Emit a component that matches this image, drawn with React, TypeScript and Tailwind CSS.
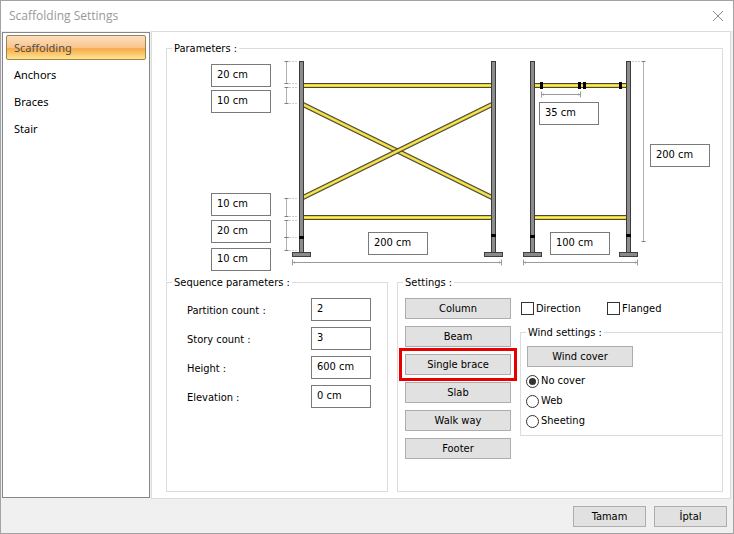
import { useState } from 'react';
import type { ReactNode } from 'react';

const sections = ['Scaffolding', 'Anchors', 'Braces', 'Stair'];
const elements = ['Column', 'Beam', 'Single brace', 'Slab', 'Walk way', 'Footer'];
const covers = ['No cover', 'Web', 'Sheeting'];

const sequence = [
  { id: 'partitions', label: 'Partition count :', value: '2' },
  { id: 'stories', label: 'Story count :', value: '3' },
  { id: 'height', label: 'Height :', value: '600 cm' },
  { id: 'elevation', label: 'Elevation :', value: '0 cm' },
];

interface ValueBoxProps {
  value: string;
  label?: string;
  id?: string;
  className?: string;
}

function ValueBox({ value, label, id, className = '' }: ValueBoxProps) {
  return (
    <input
      id={id}
      type="text"
      aria-label={label}
      defaultValue={value}
      className={`block h-[23px] w-[60px] shrink-0 border border-[#7a7a7a] bg-white pb-[3px] pl-[5px] text-[11px] ${className}`}
    />
  );
}

interface PushButtonProps {
  children: ReactNode;
  className?: string;
}

function PushButton({ children, className = '' }: PushButtonProps) {
  return (
    <button
      type="button"
      className={`flex h-[21px] items-center justify-center border border-[#adadad] bg-[#e1e1e1] pt-0.5 ${className}`}
    >
      {children}
    </button>
  );
}

interface GroupProps {
  title: string;
  children: ReactNode;
  className?: string;
}

function Group({ title, children, className = '' }: GroupProps) {
  return (
    <fieldset className={`min-w-0 border-[#dcdcdc] ${className}`}>
      <legend className="ml-[5px] px-0.5 pt-0.5 leading-[14px]">{title}</legend>
      {children}
    </fieldset>
  );
}

function CheckBox({ label, className = '' }: { label: string; className?: string }) {
  return (
    <label className={`flex items-center gap-0.5 ${className}`}>
      <input
        type="checkbox"
        className="size-[13px] appearance-none border border-[#333333] bg-white checked:bg-[#333333]"
      />
      <span className="pt-0.5">{label}</span>
    </label>
  );
}

function Post({ x, joint }: { x: number; joint: number }) {
  return (
    <g>
      <rect x={x} y={61} width={5} height={191} fill="#3a3a3a" />
      <rect x={x + 1} y={62} width={3} height={190} fill="#8c8c8c" />
      <rect x={x} y={joint} width={5} height={3} fill="#000" />
      <rect x={x - 6.5} y={252.5} width={18} height={4} fill="#8a8a8a" stroke="#3f3f3f" />
    </g>
  );
}

interface TubeProps {
  x1: number;
  y1: number;
  x2: number;
  y2: number;
}

function Tube(p: TubeProps) {
  return (
    <g>
      <line {...p} stroke="#4a4838" strokeWidth={5} />
      <line {...p} stroke="#e3cf3c" strokeWidth={3} />
      <line {...p} stroke="#fff05a" strokeWidth={1} />
    </g>
  );
}

function HorizontalDim({ x1, x2, y }: { x1: number; x2: number; y: number }) {
  return (
    <path
      d={`M${x1} ${y}H${x2}M${x1} ${y - 3}v6M${x2} ${y - 3}v6M${x1 + 2} ${y - 1}v2M${x2 - 2} ${y - 1}v2`}
      stroke="#9a9a9a"
      fill="none"
    />
  );
}

function VerticalDim({ y1, y2, x }: { y1: number; y2: number; x: number }) {
  return (
    <g fill="none">
      <path d={`M${x} ${y1}V${y2}`} stroke="#b0b0b0" />
      <path d={`M${x - 2} ${y1}h4M${x - 2} ${y2}h4`} stroke="#7f7f7f" />
    </g>
  );
}

function ScaffoldDrawing() {
  return (
    <svg width="372" height="216" viewBox="280 56 372 216" aria-hidden="true">
      {/* front view */}
      <Tube x1={303} y1={104.5} x2={492} y2={197.5} />
      <Tube x1={303} y1={197.5} x2={492} y2={104.5} />
      <Tube x1={303} y1={85.5} x2={492} y2={85.5} />
      <Tube x1={303} y1={217.5} x2={492} y2={217.5} />
      <Post x={299} joint={236} />
      <Post x={491} joint={234} />

      {/* side view */}
      <Tube x1={534} y1={85.5} x2={627} y2={85.5} />
      <Tube x1={534} y1={217.5} x2={627} y2={217.5} />
      <path d="M540 82h3v7h-3zM578 82h3v7h-3zM583 82h3v7h-3zM619 82h3v7h-3z" fill="#000" />
      <Post x={530} joint={235} />
      <Post x={626} joint={234} />

      {/* dimension lines */}
      <VerticalDim x={286.5} y1={61.5} y2={83.5} />
      <VerticalDim x={286.5} y1={87.5} y2={103.5} />
      <VerticalDim x={286.5} y1={198.5} y2={216.5} />
      <VerticalDim x={286.5} y1={220.5} y2={237.5} />
      <VerticalDim x={286.5} y1={237.5} y2={250.5} />
      <VerticalDim x={643.5} y1={61.5} y2={241.5} />
      <path
        d="M289 61.5h9M289 83.5h9M289 87.5h9M289 103.5h9M289 198.5h9M289 216.5h9M289 220.5h9M289 237.5h9M289 250.5h9M632 61.5h9"
        stroke="#cfcfcf"
        strokeDasharray="2 1"
      />
      <HorizontalDim x1={541.5} x2={580.5} y={94.5} />
      <HorizontalDim x1={292.5} x2={501.5} y={262.5} />
      <HorizontalDim x1={523.5} x2={637.5} y={262.5} />
    </svg>
  );
}

export default function App() {
  const [section, setSection] = useState('Scaffolding');
  const [cover, setCover] = useState('No cover');

  return (
    <div className="flex min-h-screen flex-col border border-[#a3a3a3] bg-[#f0f0f0] font-['DejaVu_Sans_Condensed','DejaVu_Sans',sans-serif] text-[11px] text-black">
      {/* Title bar */}
      <header className="flex h-[30px] items-center justify-between bg-white pr-[9px] pl-2">
        <h1 className="font-['Open_Sans',sans-serif] text-[12px] text-[#999999]">Scaffolding Settings</h1>
        <button type="button" aria-label="Close">
          <svg width="12" height="12" viewBox="0 0 12 12" fill="none" stroke="#8a8a8a">
            <path d="M1 1l10 10M11 1L1 11" />
          </svg>
        </button>
      </header>

      <div className="flex grow">
        {/* Sections */}
        <nav className="m-px flex w-[148px] shrink-0 flex-col gap-0.5 border border-[#828790] bg-white px-[3px] pt-0.5 font-['Noto_Sans',sans-serif]">
          {sections.map((name) => (
            <button
              key={name}
              type="button"
              onClick={() => setSection(name)}
              className={`h-[25px] rounded-[2px] border pt-0.5 pl-[7px] text-left ${
                name === section
                  ? 'border-[#a08050] bg-[linear-gradient(#fbdfc0,#fac48a_50%,#f8a94a_55%,#fee790)] text-[#4d4d4d]'
                  : 'border-transparent'
              }`}
            >
              {name}
            </button>
          ))}
        </nav>

        <main className="mr-0.5 flex min-w-0 grow flex-col border border-[#dcdcdc] bg-white pt-2 pr-[7px] pb-[6px] pl-[14px]">
          <Group title="Parameters :" className="border-x border-t">
            <div className="flex h-[225px] pt-2 pl-11">
              <div className="flex w-[69px] shrink-0 flex-col">
                <ValueBox label="Top clearance" value="20 cm" />
                <ValueBox label="Upper brace offset" value="10 cm" className="mt-[3px]" />
                <ValueBox label="Lower brace offset" value="10 cm" className="mt-20" />
                <ValueBox label="Beam height" value="20 cm" className="mt-1" />
                <ValueBox label="Footer height" value="10 cm" className="mt-[5px]" />
              </div>
              <div className="relative -mt-2 shrink-0">
                <ScaffoldDrawing />
                <ValueBox label="Bay length" value="200 cm" className="absolute top-[176px] left-[88px]" />
                <ValueBox label="Walk way width" value="35 cm" className="absolute top-[46px] left-[259px]" />
                <ValueBox label="Bay width" value="100 cm" className="absolute top-[176px] left-[270px]" />
                <ValueBox label="Story height" value="200 cm" className="absolute top-[88px] left-[370px]" />
              </div>
            </div>
          </Group>

          <div className="-mt-[7px] flex grow gap-[9px]">
            <Group title="Sequence parameters :" className="w-[222px] shrink-0 border">
              <div className="flex flex-col gap-[6px] pt-2 pr-4 pl-5">
                {sequence.map((row) => (
                  <div key={row.id} className="flex items-center justify-between">
                    <label htmlFor={row.id} className="pt-[3px]">
                      {row.label}
                    </label>
                    <ValueBox id={row.id} value={row.value} />
                  </div>
                ))}
              </div>
            </Group>

            <Group title="Settings :" className="grow border">
              <div className="flex gap-[9px] pt-2 pl-[7px]">
                <div className="flex w-[106px] shrink-0 flex-col gap-[7px]">
                  {elements.map((name) => (
                    <PushButton
                      key={name}
                      className={name === 'Single brace' ? 'outline-3 outline-offset-3 outline-[#e60000]' : ''}
                    >
                      {name}
                    </PushButton>
                  ))}
                </div>

                <div className="min-w-0 grow">
                  <div className="mb-[6px] flex h-5 items-center pl-px">
                    <CheckBox label="Direction" className="w-[86px]" />
                    <CheckBox label="Flanged" />
                  </div>

                  <Group title="Wind settings :" className="border-y border-l">
                    <div className="pt-[6px] pb-1 pl-[5px]">
                      <PushButton className="mb-1 ml-px w-[106px]">Wind cover</PushButton>
                      {covers.map((name) => (
                        <label key={name} className="flex h-5 items-center gap-0.5">
                          <input
                            type="radio"
                            name="cover"
                            checked={cover === name}
                            onChange={() => setCover(name)}
                            className="size-[13px] appearance-none rounded-full border border-[#333333] bg-white bg-clip-content p-0.5 checked:bg-[#333333]"
                          />
                          {name}
                        </label>
                      ))}
                    </div>
                  </Group>
                </div>
              </div>
            </Group>
          </div>
        </main>
      </div>

      {/* Dialog buttons */}
      <footer className="flex h-[34px] justify-end gap-2 pt-[7px] pr-[6px]">
        <PushButton className="w-[73px]">Tamam</PushButton>
        <PushButton className="w-[73px]">İptal</PushButton>
      </footer>
    </div>
  );
}
